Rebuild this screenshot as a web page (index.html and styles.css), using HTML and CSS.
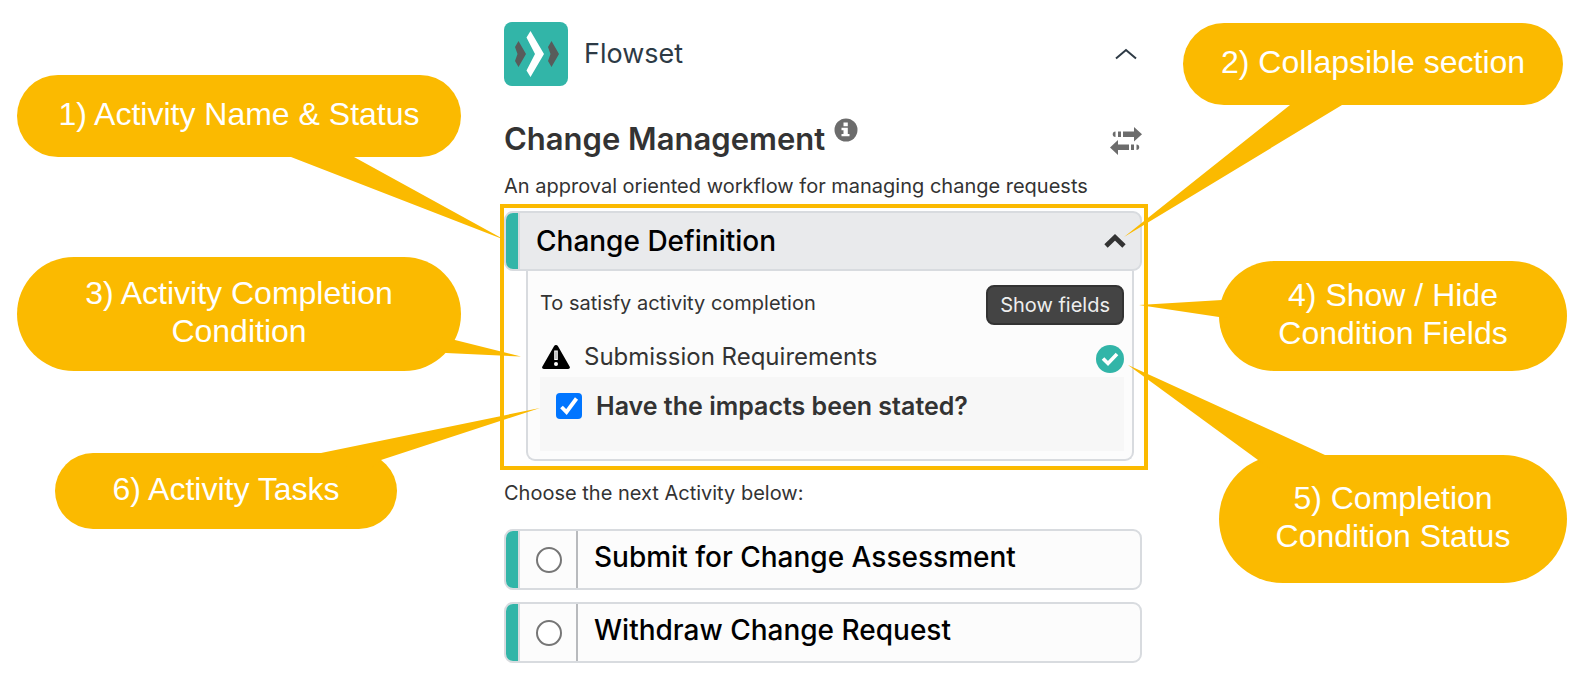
FILE: index.html
```html
<!DOCTYPE html>
<html lang="en">
<head>
<meta charset="utf-8">
<title>Flowset - Change Management</title>
<meta name="viewport" content="width=device-width, initial-scale=1">
<link rel="stylesheet" href="styles.css">
</head>
<body>
<div class="stage">
  <aside class="notes notes-left">
    <div class="note note-1">1) Activity Name &amp; Status
      <svg class="tail" width="1" height="1" aria-hidden="true"><path d="M272 80L274 82L488 165L337 82V80z"/></svg>
    </div>
    <div class="note note-3">3) Activity Completion<br>Condition
      <svg class="tail" width="1" height="1" aria-hidden="true"><path d="M425 80L438 83L504 99.500L429 96L415 90z"/></svg>
    </div>
    <div class="note note-6">6) Activity Tasks
      <svg class="tail" width="1" height="1" aria-hidden="true"><path d="M266 0L485 -45L326 7L310 20L266 4z"/></svg>
    </div>
  </aside>

  <main class="panel">
    <header class="brand">
      <svg class="logo" viewBox="0 0 64 64" role="img" aria-label="Flowset logo">
        <rect width="64" height="64" rx="8" fill="#32b5a8"/>
        <path d="M26.500 9L40 32L26.500 55L22.500 48.500L31 32L22.500 15.500z" fill="#fff"/>
        <path d="M14.500 19L22 32L14.500 45L11 39L13.500 32L11 25zM47.500 19L55 32L47.500 45L44 39L46.500 32L44 25z" fill="#585b5b"/>
      </svg>
      <span class="brand-name">Flowset</span>
      <button class="icon-button" type="button" aria-label="Collapse Flowset">
        <svg width="24" height="24" viewBox="0 0 24 24"><path d="M2 16.500L12 8L22 16.500" fill="none" stroke="#2d3a45" stroke-width="2"/></svg>
      </button>
    </header>

    <div class="title-row">
      <h1>Change Management</h1>
      <svg class="info" viewBox="0 0 24 24" role="img" aria-label="Information">
        <circle cx="12" cy="12" r="11.500" fill="#6c6c6c"/>
        <path d="M9.500 4.500h4.300v3.700H9.500zM7.500 9.700h6.300v6.200h1.700v2.300H7.500v-2.300h2v-3.700h-2z" fill="#fff"/>
      </svg>
      <button class="icon-button switch" type="button" aria-label="Switch workflow">
        <svg width="32" height="28" viewBox="0 0 32 28" fill="#6c6c6c"><path d="M13 4.500h11V0l8 7.200L24 14.500V10H13zM8 4.500h3V10H8zM5.500 4.500V10C1.800 10 1.800 4.500 5.500 4.500zM19 17.500H8V13L0 20.500L8 28v-5h11zM21 17.500h3V23h-3zM26.500 17.500V23c3.700 0 3.700-5.500 0-5.500z"/></svg>
      </button>
    </div>
    <p class="summary">An approval oriented workflow for managing change requests</p>

    <section class="activity">
      <div class="activity-head">
        <h2>Change Definition</h2>
        <button class="icon-button" type="button" aria-label="Collapse Change Definition" aria-expanded="true">
          <svg width="24" height="24" viewBox="0 0 24 24"><path d="M3 17L12 8.300L21 17" fill="none" stroke="#333" stroke-width="4.800"/></svg>
        </button>
      </div>
      <div class="activity-body">
        <div class="condition-row">
          <p>To satisfy activity completion</p>
          <button class="show-fields" type="button">Show fields</button>
        </div>
        <div class="requirement">
          <svg class="warning" viewBox="0 0 28 24" role="img" aria-label="Warning">
            <path d="M14 0c.9 0 1.500.4 2 1.200L27.600 21.500c.8 1.400 0 2.500-1.500 2.500H1.900c-1.500 0-2.300-1.100-1.500-2.500L12 1.200C12.500.4 13.100 0 14 0z"/>
            <path d="M12.200 5.500h3.600v9.500h-3.600z" fill="#fff"/><circle cx="14" cy="19" r="2" fill="#fff"/><path d="M13.500 6.500h1v7.500h-1z" fill="#888"/>
          </svg>
          <span>Submission Requirements</span>
          <svg class="done" viewBox="0 0 28 28" role="img" aria-label="Complete">
            <circle cx="14" cy="14" r="14" fill="#32b5a8"/>
            <path d="M7 13.500L12 18.500L21 9" fill="none" stroke="#fff" stroke-width="3.600"/>
          </svg>
        </div>
        <div class="task">
          <span class="tick-box">
            <input type="checkbox" id="impacts" checked>
            <svg viewBox="0 0 26 26" aria-hidden="true"><path d="M5.500 14L10.500 19L20.500 5.500" fill="none" stroke="#fff" stroke-width="3.800"/></svg>
          </span>
          <label for="impacts">Have the impacts been stated?</label>
        </div>
      </div>
    </section>

    <p class="prompt">Choose the next Activity below:</p>
    <div class="choices">
      <div class="choice">
        <span class="choice-radio"><input type="radio" name="next" id="submit"></span>
        <label for="submit">Submit for Change Assessment</label>
      </div>
      <div class="choice">
        <span class="choice-radio"><input type="radio" name="next" id="withdraw"></span>
        <label for="withdraw">Withdraw Change Request</label>
      </div>
    </div>
  </main>

  <aside class="notes notes-right">
    <div class="note note-2">2) Collapsible section
      <svg class="tail" width="1" height="1" aria-hidden="true"><path d="M109 80L107 82L-59 214L159 82V80z"/></svg>
    </div>
    <div class="note note-4">4) Show / Hide<br>Condition Fields
      <svg class="tail" width="1" height="1" aria-hidden="true"><path d="M12 38L3 39L-80 44L0 56L12 57z"/></svg>
    </div>
    <div class="note note-5">5) Completion<br>Condition Status
      <svg class="tail" width="1" height="1" aria-hidden="true"><path d="M106 0L-91 -90L39 5L60 20L106 4z"/></svg>
    </div>
  </aside>
</div>
</body>
</html>
```
FILE: styles.css
```css
*,
*::before {
  box-sizing: border-box;
}

body {
  margin: 0;
  background: #fff;
  color: #333;
  font-family: Inter, "Liberation Sans", sans-serif;
  font-size: 20px;
  line-height: 28px;
}

h1, h2, p {
  margin: 0;
}

button, input {
  margin: 0;
  font: inherit;
}

.stage {
  display: grid;
  grid-template-columns: 504fr 638fr 442fr;
  padding-bottom: 20px;
}

.notes {
  display: flex;
  flex-direction: column;
}

.notes-left {
  padding: 75px 43px 0 17px;
}

.notes-right {
  padding: 23px 17px 0 41px;
}

.note {
  position: relative;
  z-index: 1;
  border-radius: 64px;
  background: #fbba00;
  color: #fff;
  font-family: "Liberation Sans", Arial, sans-serif;
  font-size: 32px;
  line-height: 38px;
  text-align: center;
}

.tail {
  position: absolute;
  z-index: -1;
  top: 0;
  left: 0;
  overflow: visible;
  fill: #fbba00;
}

.note-1,
.note-2 {
  padding: 20px 0 24px;
}

.note-2 {
  margin-right: 4px;
}

.note-3 {
  margin-top: 100px;
  padding: 17px 0 21px;
}

.note-6 {
  margin: 82px 64px 0 38px;
  padding: 17px 0 21px;
}

.note-4 {
  margin: 156px 0 0 36px;
  padding: 15px 0 19px;
}

.note-5 {
  margin: 84px 0 0 36px;
  padding: 24px 0 28px;
}

.panel {
  padding-top: 22px;
}

.brand {
  display: flex;
  align-items: center;
  gap: 16px;
  padding-right: 4px;
}

.logo {
  width: 64px;
  height: 64px;
}

.brand-name {
  color: #2d3a45;
  font-size: 27px;
}

.icon-button {
  display: flex;
  margin-left: auto;
  padding: 0;
  border: 0;
  background: none;
}

.switch {
  padding-top: 4px;
}

.title-row {
  display: flex;
  align-items: center;
  margin-top: 32px;
}

h1 {
  font-size: 31px;
  font-weight: 600;
  line-height: 42px;
}

.info {
  width: 24px;
  height: 24px;
  margin: 0 0 18px 9px;
}

.summary {
  margin-top: 12px;
}

.activity {
  margin: 4px -6px 0 -4px;
  padding: 3px 2px 5px 0;
  border: 4px solid #fbba00;
}

.activity-head,
.choice {
  display: flex;
  border: 2px solid #d8dbdf;
  border-radius: 9px;
  background: #fcfcfc;
  overflow: hidden;
}

.activity-head::before,
.choice::before {
  content: "";
  width: 14px;
  border-right: 2px solid #d8dbdf;
  background: #32b5a8;
}

.activity-head {
  align-items: center;
  padding-right: 13px;
  background: #e9eaec;
}

.activity-head::before {
  align-self: stretch;
}

h2 {
  padding: 10px 0 10px 16px;
  color: #000;
  font-size: 28px;
  font-weight: 500;
  line-height: 36px;
}

.activity-body {
  margin: 0 8px 0 22px;
  padding: 14px 8px 8px 12px;
  border: 2px solid #d8dbdf;
  border-top: 0;
  border-radius: 0 0 9px 9px;
  background: #fcfcfc;
}

.condition-row {
  display: flex;
  align-items: flex-start;
  justify-content: space-between;
}

.condition-row p {
  padding-top: 4px;
}

.show-fields {
  padding: 4px 12px;
  border: 2px solid #333;
  border-radius: 8px;
  background: #444;
  color: #eee;
  line-height: 28px;
}

.requirement {
  display: flex;
  align-items: center;
  margin-top: 16px;
  padding-left: 2px;
  font-size: 24px;
  line-height: 32px;
}

.warning {
  width: 28px;
  height: 24px;
  margin-right: 14px;
}

.done {
  width: 28px;
  height: 28px;
  margin: 4px 0 0 auto;
}

.task {
  display: flex;
  align-items: center;
  gap: 14px;
  margin-top: 4px;
  padding: 12px 16px 28px;
  background: #f7f7f7;
  font-size: 25px;
  font-weight: 600;
  line-height: 34px;
}

.tick-box {
  position: relative;
  width: 26px;
  height: 26px;
}

.tick-box input {
  display: block;
  width: 26px;
  height: 26px;
  border-radius: 4px;
  appearance: none;
}

.tick-box input:checked {
  background: #0075ff;
}

.tick-box svg {
  position: absolute;
  inset: 0;
  pointer-events: none;
}

.prompt {
  margin-top: 9px;
}

.choices {
  display: flex;
  flex-direction: column;
  gap: 12px;
  margin-top: 22px;
}

.choice-radio {
  display: flex;
  align-items: center;
  padding: 0 14px 0 16px;
  border-right: 2px solid #b8babd;
}

.choice input {
  width: 26px;
  height: 26px;
  border: 2px solid #767676;
  border-radius: 50%;
  background: #fff;
  appearance: none;
}

.choice input:checked {
  background: radial-gradient(#0075ff 50%, #fff 54%);
}

.choice label {
  flex: 1;
  padding: 8px 16px 13px;
  color: #000;
  font-size: 28px;
  font-weight: 500;
  line-height: 36px;
}
```
